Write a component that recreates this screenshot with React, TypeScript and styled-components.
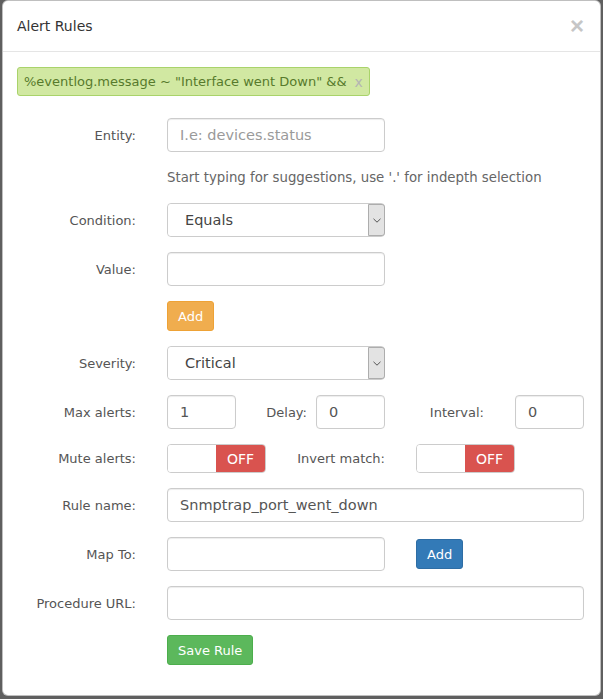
import React from 'react'
import styled, { createGlobalStyle } from 'styled-components'

const GlobalStyle = createGlobalStyle`
  html, body {
    margin: 0;
    padding: 0;
    background: #5f5f5f;
  }
  body {
    font-family: "DejaVu Sans", Verdana, sans-serif;
    font-size: 13px;
    color: #555;
  }
  * { box-sizing: border-box; }
`

const Backdrop = styled.div`
  padding: 0 2px 2px 2px;
  min-height: 699px;
`

const Modal = styled.div`
  width: 599px;
  background: #fff;
  border: 1px solid rgba(0, 0, 0, 0.25);
  border-radius: 6px;
`

const ModalHeader = styled.div`
  display: flex;
  justify-content: space-between;
  align-items: center;
  padding: 15px 16px 15px 14px;
  border-bottom: 1px solid #e5e5e5;
`

const Title = styled.h4`
  margin: 0;
  font-size: 14px;
  line-height: 20px;
  font-weight: normal;
  color: #333;
`

const Close = styled.button`
  border: 0;
  background: none;
  padding: 0;
  font-family: "Liberation Sans", Arial, sans-serif;
  font-size: 24px;
  font-weight: bold;
  line-height: 20px;
  color: #c6c6c6;
  cursor: pointer;
`

const ModalBody = styled.div`
  padding: 15px 14px 30px 14px;
`

const Tag = styled.span`
  display: inline-flex;
  align-items: center;
  gap: 8px;
  height: 29px;
  padding: 0 6px 0 6px;
  background: #d1e8a2;
  border: 1px solid #a9d36a;
  border-radius: 3px;
  color: #577a2c;
  font-size: 13px;
  margin-bottom: 22px;
`

const TagRemove = styled.span`
  color: #b4b4b4;
  font-size: 14px;
`

const Form = styled.form`
  display: flex;
  flex-direction: column;
  gap: 15px;
`

const Row = styled.div`
  display: flex;
  align-items: center;
`

const Label = styled.label<{ $w?: number; $gap?: number }>`
  width: ${p => p.$w ?? 119}px;
  margin-right: ${p => p.$gap ?? 31}px;
  text-align: right;
  color: #555;
  flex-shrink: 0;
`

const Input = styled.input<{ $w: number }>`
  width: ${p => p.$w}px;
  height: 34px;
  padding: 6px 12px;
  border: 1px solid #ccc;
  border-radius: 4px;
  font-family: inherit;
  font-size: 14.5px;
  color: #555;
  box-shadow: inset 0 1px 1px rgba(0, 0, 0, 0.075);
  &::placeholder { color: #9a9a9a; }
`

const Help = styled.div`
  margin-left: 150px;
  line-height: 21px;
  height: 21px;
  font-size: 13.3px;
  color: #666;
`

const SelectBox = styled.div`
  display: flex;
  width: 218px;
  height: 34px;
  border: 1px solid #ccc;
  border-radius: 4px;
`

const NativeSelect = styled.select`
  flex: 1;
  appearance: none;
  border: 0;
  border-radius: 4px 0 0 4px;
  background: #fff;
  padding: 0 0 0 17px;
  font-family: inherit;
  font-size: 14.5px;
  color: #444;
  outline: none;
`

const Arrow = styled.span`
  width: 17px;
  margin: 0 -1px 0 0;
  display: flex;
  align-items: center;
  justify-content: center;
  background: #e3e3e3;
  border: 1px solid #adadad;
  border-radius: 0 3px 3px 0;
`

const Button = styled.button<{ $bg: string; $border: string }>`
  height: 30px;
  padding: 0 10px;
  border: 1px solid ${p => p.$border};
  border-radius: 3px;
  background: ${p => p.$bg};
  color: #fff;
  font-family: inherit;
  font-size: 13px;
  cursor: pointer;
`

const ButtonRow = styled.div`
  margin-left: 150px;
  display: flex;
`

const Toggle = styled.div`
  display: flex;
  width: 99px;
  height: 29px;
  border: 1px solid #ccc;
  border-radius: 4px;
  overflow: hidden;
`

const ToggleBlank = styled.span`
  flex: 1;
  background: #fff;
`

const ToggleOff = styled.span`
  width: 49px;
  display: flex;
  align-items: center;
  justify-content: center;
  background: #d9534f;
  color: #fff;
  font-size: 14px;
`

const Chevron = () => (
  <svg width="8" height="5" viewBox="0 0 8 5">
    <path d="M0.5 0.8 L4 4.2 L7.5 0.8" fill="none" stroke="#555" strokeWidth="1" />
  </svg>
)

const Select: React.FC<{ value: string }> = ({ value }) => (
  <SelectBox>
    <NativeSelect defaultValue={value}>
      <option>{value}</option>
    </NativeSelect>
    <Arrow>
      <Chevron />
    </Arrow>
  </SelectBox>
)

const Switch = () => (
  <Toggle>
    <ToggleBlank />
    <ToggleOff>OFF</ToggleOff>
  </Toggle>
)

export default function App() {
  return (
    <Backdrop>
      <GlobalStyle />
      <Modal>
        <ModalHeader>
          <Title>Alert Rules</Title>
          <Close type="button">×</Close>
        </ModalHeader>
        <ModalBody>
          <Tag>
            %eventlog.message ~ "Interface went Down" &amp;&amp;
            <TagRemove>x</TagRemove>
          </Tag>
          <Form>
            <Row>
              <Label>Entity:</Label>
              <Input $w={218} placeholder="I.e: devices.status" />
            </Row>
            <Help>Start typing for suggestions, use '.' for indepth selection</Help>
            <Row>
              <Label>Condition:</Label>
              <Select value="Equals" />
            </Row>
            <Row>
              <Label>Value:</Label>
              <Input $w={218} />
            </Row>
            <ButtonRow>
              <Button type="button" $bg="#f0ad4e" $border="#eea236">Add</Button>
            </ButtonRow>
            <Row>
              <Label>Severity:</Label>
              <Select value="Critical" />
            </Row>
            <Row>
              <Label>Max alerts:</Label>
              <Input $w={69} defaultValue="1" />
              <Label $w={71} $gap={9}>Delay:</Label>
              <Input $w={69} defaultValue="0" />
              <Label $w={99}>Interval:</Label>
              <Input $w={69} defaultValue="0" />
            </Row>
            <Row>
              <Label>Mute alerts:</Label>
              <Switch />
              <Label>Invert match:</Label>
              <Switch />
            </Row>
            <Row>
              <Label>Rule name:</Label>
              <Input $w={417} defaultValue="Snmptrap_port_went_down" />
            </Row>
            <Row>
              <Label>Map To:</Label>
              <Input $w={218} />
              <Button type="button" $bg="#337ab7" $border="#2e6da4" style={{ marginLeft: 31 }}>Add</Button>
            </Row>
            <Row>
              <Label>Procedure URL:</Label>
              <Input $w={417} />
            </Row>
            <ButtonRow>
              <Button type="button" $bg="#5cb85c" $border="#4cae4c">Save Rule</Button>
            </ButtonRow>
          </Form>
        </ModalBody>
      </Modal>
    </Backdrop>
  )
}
